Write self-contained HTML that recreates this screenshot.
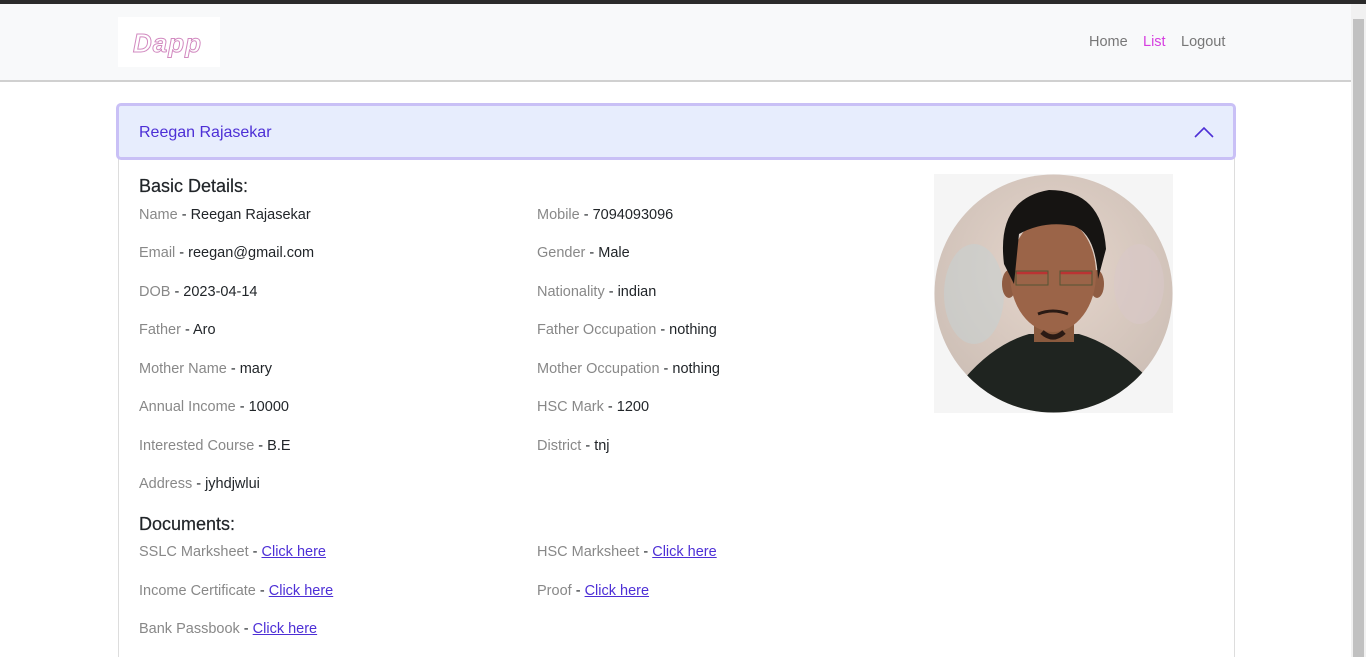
<!DOCTYPE html>
<html style="width:1366px;height:657px;overflow:hidden"><head><meta charset="utf-8"><style>
*{box-sizing:border-box;margin:0;padding:0}
body{width:1366px;height:657px;overflow:hidden;background:#fff;font-family:"Liberation Sans","DejaVu Sans",sans-serif;position:relative}
.topbar{position:absolute;left:0;top:0;width:1366px;height:4px;background:#2b2b2b}
.nav{position:absolute;left:0;top:4px;width:1351px;height:78px;background:#f8f9fa;border-bottom:2px solid #d0d0d0}
.logo{position:absolute;left:118px;top:13px;width:102px;height:50px;background:#fff}
.logo span{position:absolute;left:15px;top:11px;font:italic bold 26px "Liberation Sans",sans-serif;color:#fff;-webkit-text-stroke:1px #d28ac0;letter-spacing:1px}
.links{position:absolute;top:30px;font-size:14.5px;color:#777}
.scroll{position:absolute;right:0;top:4px;width:15px;height:653px;background:#f1f1f1}
.scroll i{position:absolute;left:2px;top:15px;width:11px;height:638px;background:#c1c1c1}
.acc{position:absolute;left:118px;top:104px;width:1117px;height:553px;border:1px solid #ddd;border-bottom:none;border-radius:5px 5px 0 0}
.hdr{position:absolute;left:116px;top:103px;width:1120px;height:57px;background:#e7edfd;border:3px solid #c9c0f6;border-radius:5px}
.hdr span{position:absolute;left:20px;top:18px;font-size:16px;color:#4d2fd6}
.t{position:absolute;font-size:14.5px;color:#212529;white-space:nowrap}
.t b{font-weight:normal;color:#888}
.t a{color:#4d2fd6;text-decoration:underline}
.h{position:absolute;font-size:18px;color:#212529;-webkit-text-stroke:.2px #212529}
</style></head><body>
<div class="topbar"></div>
<div class="nav">
<div class="logo"><span>Dapp</span></div>
<div class="links" style="left:1089px">Home</div>
<div class="links" style="left:1143px;color:#d63ee0">List</div>
<div class="links" style="left:1181px">Logout</div>
</div>
<div class="scroll"><i></i></div>
<div class="acc"></div>
<div class="hdr"><span>Reegan Rajasekar</span>
<svg style="position:absolute;left:1075px;top:20px" width="20" height="12"><path d="M1 11 L10 2 L19 11" fill="none" stroke="#4d2fd6" stroke-width="1.6"/></svg></div>
<div class="h" style="left:139px;top:176px">Basic Details:</div>
<div class="t" style="left:139px;top:207px"><b>Name</b> - Reegan Rajasekar</div>
<div class="t" style="left:537px;top:207px"><b>Mobile</b> - 7094093096</div>
<div class="t" style="left:139px;top:245px"><b>Email</b> - reegan@gmail.com</div>
<div class="t" style="left:537px;top:245px"><b>Gender</b> - Male</div>
<div class="t" style="left:139px;top:284px"><b>DOB</b> - 2023-04-14</div>
<div class="t" style="left:537px;top:284px"><b>Nationality</b> - indian</div>
<div class="t" style="left:139px;top:322px"><b>Father</b> - Aro</div>
<div class="t" style="left:537px;top:322px"><b>Father Occupation</b> - nothing</div>
<div class="t" style="left:139px;top:361px"><b>Mother Name</b> - mary</div>
<div class="t" style="left:537px;top:361px"><b>Mother Occupation</b> - nothing</div>
<div class="t" style="left:139px;top:399px"><b>Annual Income</b> - 10000</div>
<div class="t" style="left:537px;top:399px"><b>HSC Mark</b> - 1200</div>
<div class="t" style="left:139px;top:438px"><b>Interested Course</b> - B.E</div>
<div class="t" style="left:537px;top:438px"><b>District</b> - tnj</div>
<div class="t" style="left:139px;top:476px"><b>Address</b> - jyhdjwlui</div>
<div class="h" style="left:139px;top:514px">Documents:</div>
<div class="t" style="left:139px;top:544px"><b>SSLC Marksheet</b> - <a>Click here</a></div>
<div class="t" style="left:537px;top:544px"><b>HSC Marksheet</b> - <a>Click here</a></div>
<div class="t" style="left:139px;top:583px"><b>Income Certificate</b> - <a>Click here</a></div>
<div class="t" style="left:537px;top:583px"><b>Proof</b> - <a>Click here</a></div>
<div class="t" style="left:139px;top:621px"><b>Bank Passbook</b> - <a>Click here</a></div>
<svg style="position:absolute;left:934px;top:174px" width="239" height="239">
<defs><clipPath id="c"><circle cx="119.5" cy="119.5" r="119"/></clipPath>
<radialGradient id="bg" cx="0.5" cy="0.4" r="0.6"><stop offset="0" stop-color="#e6d6cc"/><stop offset="1" stop-color="#cdbfb6"/></radialGradient></defs>
<rect width="239" height="239" fill="#f5f5f5"/>
<g clip-path="url(#c)">
<rect width="239" height="239" fill="url(#bg)"/>
<ellipse cx="40" cy="120" rx="30" ry="50" fill="#c8d0d0" opacity=".6"/>
<ellipse cx="205" cy="110" rx="25" ry="40" fill="#d8c8c8" opacity=".6"/>
<path d="M30 205 Q60 170 95 160 L145 160 Q180 170 215 205 L239 239 L0 239Z" fill="#1f2420"/>
<rect x="100" y="130" width="40" height="38" fill="#8a5a3e"/>
<ellipse cx="75" cy="110" rx="7" ry="14" fill="#8f5c42"/>
<ellipse cx="163" cy="110" rx="7" ry="14" fill="#8f5c42"/>
<ellipse cx="119" cy="100" rx="43" ry="58" fill="#9b6448"/>
<path d="M70 90 Q62 25 115 16 Q168 16 172 75 L164 105 Q162 60 140 52 Q110 46 85 60 L80 110Z" fill="#161412"/>
<path d="M82 99 H114 M126 99 H158" stroke="#b33" stroke-width="2.5"/>
<rect x="82" y="97" width="32" height="14" fill="none" stroke="#553" stroke-width="1"/>
<rect x="126" y="97" width="32" height="14" fill="none" stroke="#553" stroke-width="1"/>
<path d="M104 140 Q119 134 134 140" stroke="#2a1a14" stroke-width="3" fill="none"/>
<path d="M108 158 Q119 168 130 158" stroke="#2a1a14" stroke-width="5" fill="none"/>
</g></svg>
</body></html>
